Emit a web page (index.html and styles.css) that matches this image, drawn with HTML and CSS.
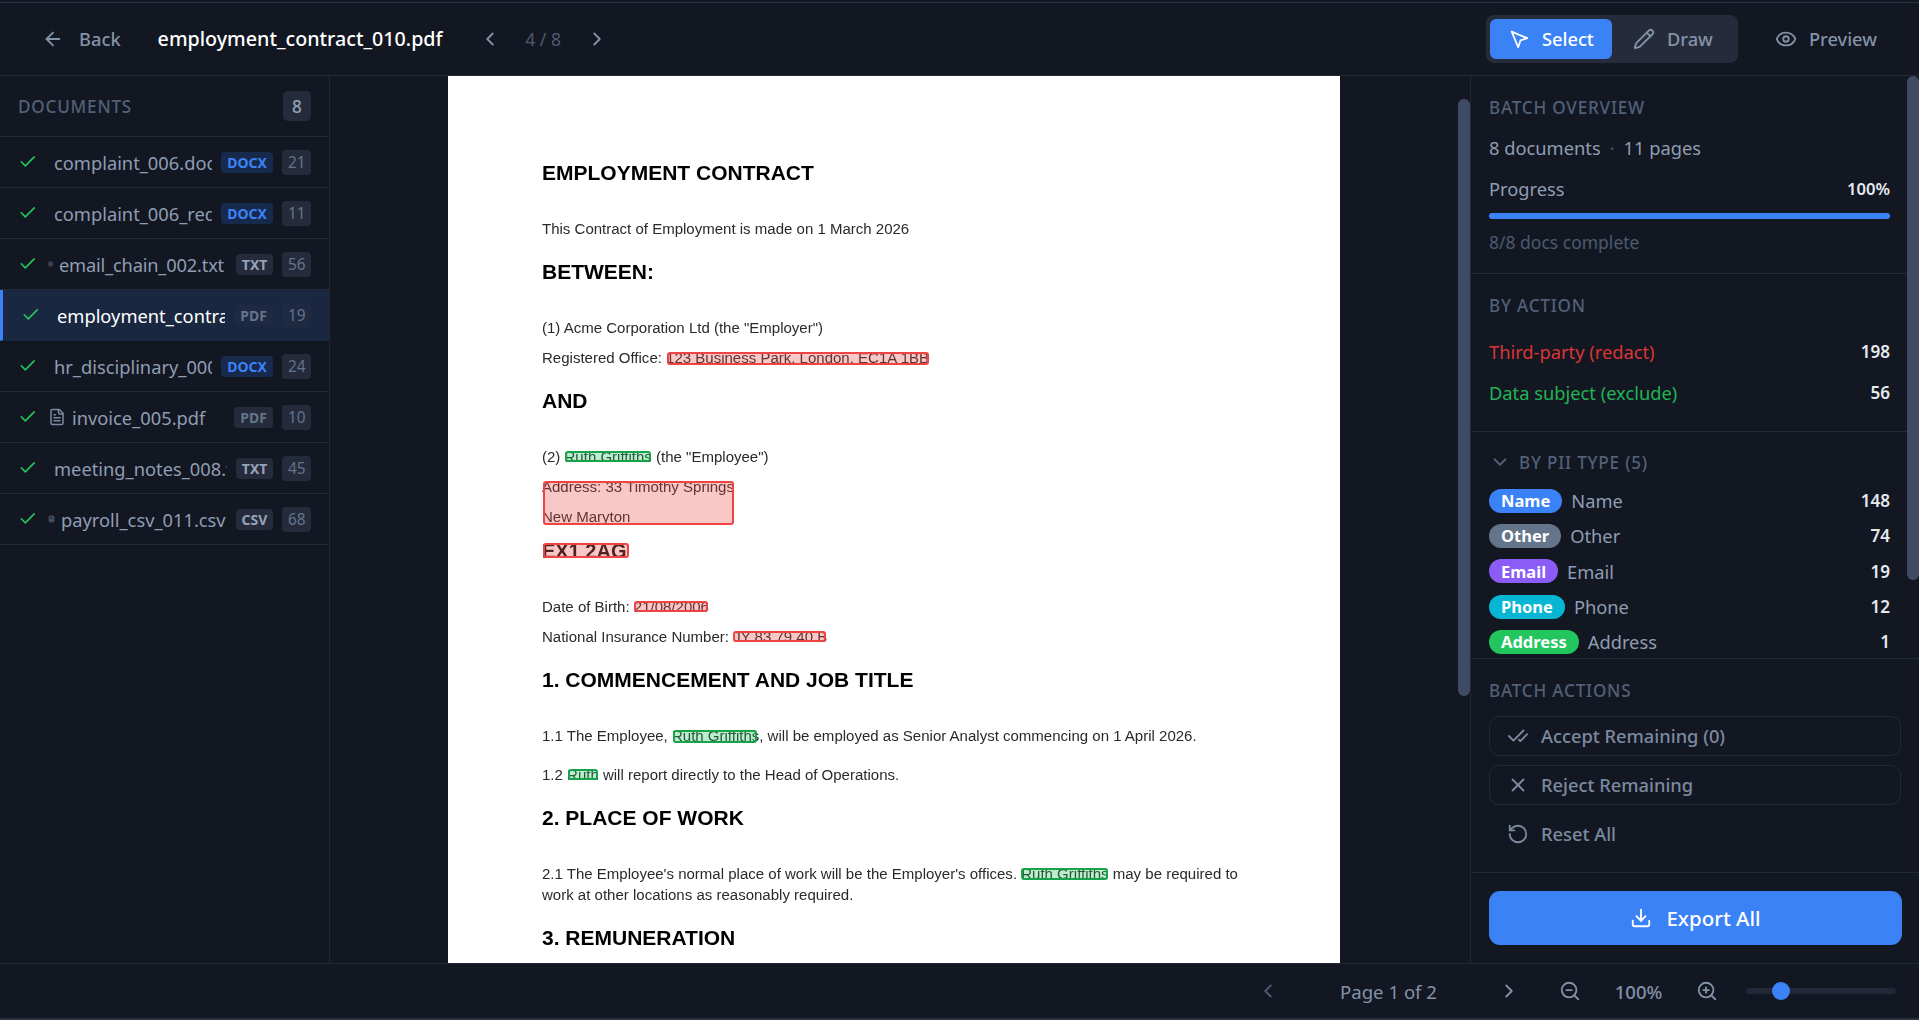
FILE: index.html
```html
<!DOCTYPE html>
<html lang="en">
<head>
<meta charset="utf-8">
<title>employment_contract_010.pdf</title>
<link rel="stylesheet" href="styles.css">
</head>
<body>
<svg class="defs" aria-hidden="true">
  <symbol id="i-check" viewBox="0 0 24 24"><path d="M20 6 9 17l-5-5"/></symbol>
  <symbol id="i-file" viewBox="0 0 24 24"><path d="M15 2H6a2 2 0 0 0-2 2v16a2 2 0 0 0 2 2h12a2 2 0 0 0 2-2V7Z"/><path d="M14 2v4a2 2 0 0 0 2 2h4"/><path d="M10 9H8"/><path d="M16 13H8"/><path d="M16 17H8"/></symbol>
  <symbol id="i-left" viewBox="0 0 24 24"><path d="m15 18-6-6 6-6"/></symbol>
  <symbol id="i-right" viewBox="0 0 24 24"><path d="m9 18 6-6-6-6"/></symbol>
</svg>
<div class="app">
  <header class="topbar">
    <button class="back"><svg class="ic ic-22" viewBox="0 0 24 24"><path d="m12 19-7-7 7-7"/><path d="M19 12H5"/></svg><span>Back</span></button>
    <h1 class="doc-title">employment_contract_010.pdf</h1>
    <nav class="pager">
      <svg class="ic ic-22"><use href="#i-left"/></svg>
      <span class="pager-text">4 / 8</span>
      <svg class="ic ic-22"><use href="#i-right"/></svg>
    </nav>
    <div class="spacer"></div>
    <div class="mode">
      <button class="mode-btn mode-on"><svg class="ic ic-22" viewBox="0 0 24 24"><path d="M4.04 4.04 11.1 21l2.5-7.4L21 11.1z"/></svg>Select</button>
      <button class="mode-btn"><svg class="ic ic-22" viewBox="0 0 24 24"><path d="M21.17 6.81a1 1 0 0 0-3.99-3.99L3.84 16.17a2 2 0 0 0-.5.83l-1.32 4.35a.5.5 0 0 0 .62.62l4.35-1.32a2 2 0 0 0 .83-.5z"/><path d="m15 5 4 4"/></svg>Draw</button>
    </div>
    <button class="preview"><svg class="ic ic-22" viewBox="0 0 24 24"><path d="M2.06 12.35a1 1 0 0 1 0-.7 10.75 10.75 0 0 1 19.88 0 1 1 0 0 1 0 .7 10.75 10.75 0 0 1-19.88 0"/><circle cx="12" cy="12" r="3"/></svg>Preview</button>
  </header>

  <div class="body">
    <aside class="sidebar">
      <div class="side-head"><span class="label">DOCUMENTS</span><span class="side-total">8</span></div>
      <ul class="doc-list">
        <li class="row"><svg class="ic ic-check"><use href="#i-check"/></svg><span class="name">complaint_006.docx</span><span class="tag tag-blue">DOCX</span><span class="count">21</span></li>
        <li class="row"><svg class="ic ic-check"><use href="#i-check"/></svg><span class="name">complaint_006_redacted.docx</span><span class="tag tag-blue">DOCX</span><span class="count">11</span></li>
        <li class="row"><svg class="ic ic-check"><use href="#i-check"/></svg><svg class="ic file f5"><use href="#i-file"/></svg><span class="name">email_chain_002.txt</span><span class="tag tag-light">TXT</span><span class="count">56</span></li>
        <li class="row row-on"><svg class="ic ic-check"><use href="#i-check"/></svg><span class="name">employment_contract_010.pdf</span><span class="tag">PDF</span><span class="count">19</span></li>
        <li class="row"><svg class="ic ic-check"><use href="#i-check"/></svg><span class="name">hr_disciplinary_000.docx</span><span class="tag tag-blue">DOCX</span><span class="count">24</span></li>
        <li class="row"><svg class="ic ic-check"><use href="#i-check"/></svg><svg class="ic file f18"><use href="#i-file"/></svg><span class="name">invoice_005.pdf</span><span class="tag">PDF</span><span class="count">10</span></li>
        <li class="row"><svg class="ic ic-check"><use href="#i-check"/></svg><span class="name">meeting_notes_008.txt</span><span class="tag tag-light">TXT</span><span class="count">45</span></li>
        <li class="row"><svg class="ic ic-check"><use href="#i-check"/></svg><svg class="ic file f7"><use href="#i-file"/></svg><span class="name">payroll_csv_011.csv</span><span class="tag tag-light">CSV</span><span class="count">68</span></li>
      </ul>
    </aside>

    <main class="viewer">
      <article class="page">
        <div class="sheet">
          <h2 class="dh">EMPLOYMENT CONTRACT</h2>
          <p class="dp">This Contract of Employment is made on 1 March 2026</p>
          <h2 class="dh">BETWEEN:</h2>
          <p class="dp">(1) Acme Corporation Ltd (the "Employer")</p>
          <p class="dp">Registered Office: 123 Business Park, London, EC1A 1BB</p>
          <h2 class="dh">AND</h2>
          <p class="dp">(2) Ruth Griffiths (the "Employee")</p>
          <p class="dp">Address: 33 Timothy Springs</p>
          <p class="dp">New Maryton</p>
          <p class="dp dp-b g14">EX1 2AG</p>
          <p class="dp g36">Date of Birth: 21/08/2006</p>
          <p class="dp">National Insurance Number: JY 83 79 40 B</p>
          <h2 class="dh">1. COMMENCEMENT AND JOB TITLE</h2>
          <p class="dp">1.1 The Employee, Ruth Griffiths, will be employed as Senior Analyst commencing on 1 April 2026.</p>
          <p class="dp g19">1.2 Ruth will report directly to the Head of Operations.</p>
          <h2 class="dh">2. PLACE OF WORK</h2>
          <p class="dp">2.1 The Employee's normal place of work will be the Employer's offices. Ruth Griffiths may be required to</p>
          <p class="dp g1">work at other locations as reasonably required.</p>
          <h2 class="dh">3. REMUNERATION</h2>
        </div>
        <i class="mark red m-office"></i>
        <i class="mark green m-name"></i>
        <i class="mark red m-addr"></i>
        <i class="mark red m-post"></i>
        <i class="mark red m-dob"></i>
        <i class="mark red m-ni"></i>
        <i class="mark green m-n11"></i>
        <i class="mark green m-n12"></i>
        <i class="mark green m-n21"></i>
      </article>
      <div class="thumb thumb-main"></div>
    </main>

    <aside class="panel">
      <div class="panel-scroll">
        <section class="sec sec-over">
          <h3 class="label">BATCH OVERVIEW</h3>
          <div class="over-line"><span>8 documents</span><span class="dot">·</span><span>11 pages</span></div>
          <div class="stat stat-progress"><span>Progress</span><b>100%</b></div>
          <div class="bar"></div>
          <div class="muted">8/8 docs complete</div>
        </section>
        <section class="sec sec-action">
          <h3 class="label">BY ACTION</h3>
          <div class="stat stat-red"><span>Third-party (redact)</span><b>198</b></div>
          <div class="stat stat-green"><span>Data subject (exclude)</span><b>56</b></div>
        </section>
        <section class="sec sec-pii">
          <h3 class="label label-row"><svg class="ic ic-22" viewBox="0 0 24 24"><path d="m6 9 6 6 6-6"/></svg>BY PII TYPE (5)</h3>
          <div class="pii"><span class="pill p-blue">Name</span><span>Name</span><b>148</b></div>
          <div class="pii"><span class="pill p-slate">Other</span><span>Other</span><b>74</b></div>
          <div class="pii"><span class="pill p-purple">Email</span><span>Email</span><b>19</b></div>
          <div class="pii"><span class="pill p-cyan">Phone</span><span>Phone</span><b>12</b></div>
          <div class="pii"><span class="pill p-green">Address</span><span>Address</span><b>1</b></div>
        </section>
        <div class="thumb thumb-panel"></div>
      </div>
      <section class="sec sec-batch">
        <h3 class="label">BATCH ACTIONS</h3>
        <button class="act act-line"><svg class="ic ic-22" viewBox="0 0 24 24"><path d="M18 6 7 17l-5-5"/><path d="m22 10-7.5 7.5L13 16"/></svg>Accept Remaining (0)</button>
        <button class="act act-line"><svg class="ic ic-22" viewBox="0 0 24 24"><path d="M18 6 6 18"/><path d="m6 6 12 12"/></svg>Reject Remaining</button>
        <button class="act"><svg class="ic ic-22" viewBox="0 0 24 24"><path d="M3 12a9 9 0 1 0 9-9 9.75 9.75 0 0 0-6.74 2.74L3 8"/><path d="M3 3v5h5"/></svg>Reset All</button>
      </section>
      <div class="export-wrap">
        <button class="export"><svg class="ic ic-22" viewBox="0 0 24 24"><path d="M12 15V3"/><path d="M21 15v4a2 2 0 0 1-2 2H5a2 2 0 0 1-2-2v-4"/><path d="m7 10 5 5 5-5"/></svg>Export All</button>
      </div>
    </aside>
  </div>

  <footer class="footer">
    <svg class="ic ic-22 dim"><use href="#i-left"/></svg>
    <span class="page-of">Page 1 of 2</span>
    <svg class="ic ic-22 fwd"><use href="#i-right"/></svg>
    <svg class="ic ic-22 zo" viewBox="0 0 24 24"><circle cx="11" cy="11" r="8"/><path d="m21 21-4.3-4.3"/><path d="M8 11h6"/></svg>
    <span class="zoom-val">100%</span>
    <svg class="ic ic-22" viewBox="0 0 24 24"><circle cx="11" cy="11" r="8"/><path d="m21 21-4.3-4.3"/><path d="M11 8v6"/><path d="M8 11h6"/></svg>
    <div class="slider"><span class="knob"></span></div>
  </footer>
</div>
</body>
</html>
```
FILE: styles.css
```css
* { box-sizing: border-box; }
html, body { margin: 0; height: 100%; overflow: hidden; }
body {
  background: #131722;
  color: #8f9db3;
  font-family: "Noto Sans", sans-serif;
  font-size: 18.3px;
}
.defs { position: absolute; width: 0; height: 0; }
button { font: inherit; color: inherit; background: none; border: 0; padding: 0; }
h1, h2, h3, p, ul { margin: 0; padding: 0; list-style: none; }
.ic { fill: none; stroke: currentColor; stroke-width: 2; stroke-linecap: round; stroke-linejoin: round; flex: none; }
.ic-22 { width: 22px; height: 22px; }
.app { height: 1020px; display: flex; flex-direction: column; border-bottom: 2px solid #2a3040; }

/* top bar */
.topbar {
  height: 76px; flex: none;
  padding: 2px 42px 0 42px;
  box-shadow: inset 0 2px 0 #131722, inset 0 3px 0 #2b3246;
  border-bottom: 1px solid #222838;
  display: flex; align-items: center;
}
.back { display: flex; align-items: center; gap: 15px; font-weight: 500; color: #8492a8; }
.doc-title { margin-left: 37px; font-size: 19.7px; font-weight: 500; color: #fff; }
.pager { margin-left: 36px; display: flex; align-items: center; color: #8492a8; }
.pager-text { width: 85px; text-align: center; font-size: 17.6px; color: #4d5a70; }
.spacer { flex: 1; }
.mode { display: flex; padding: 4px; background: #252b3b; border-radius: 8px; height: 48px; width: 252px; }
.mode-btn { display: flex; align-items: center; justify-content: center; gap: 12px; width: 124px; border-radius: 6px; font-weight: 500; color: #8492a8; }
.mode-on { background: #3b82f6; color: #fff; }
.preview { margin-left: 37px; display: flex; align-items: center; gap: 12px; font-weight: 500; color: #8492a8; }

/* body */
.body { flex: 1; min-height: 0; display: flex; }
.sidebar { width: 330px; flex: none; border-right: 1px solid #222838; }
.label { font-size: 17.1px; font-weight: 500; letter-spacing: .8px; color: #526078; }
.side-head { height: 61px; padding: 0 18px; display: flex; align-items: center; justify-content: space-between; border-bottom: 1px solid #222838; }
.side-total { width: 28px; height: 30px; border-radius: 5px; background: #252b3b; color: #94a3b8; font-size: 17.1px; font-weight: 500; display: flex; align-items: center; justify-content: center; }
.row { height: 51px; padding: 0 18px; display: flex; align-items: center; border-bottom: 1px solid #222838; }
.row-on { background: #1a2740; border-left: 3px solid #3b82f6; border-bottom-color: #1a2740; }
.row-on .name { color: #fff; }
.ic-check { width: 19.5px; height: 19.5px; margin-right: 16.5px; color: #22c55e; }
.file { height: 18px; margin-left: -6px; margin-right: 6px; color: #7c8aa0; }
.f5 { width: 5px; }
.f7 { width: 7px; }
.f18 { width: 18px; }
.name { flex: 1 1 0; min-width: 0; overflow: hidden; white-space: nowrap; }
.f5 + .name { letter-spacing: -.2px; }
.tag { flex: none; margin-left: 9px; height: 21px; padding: 0 6.5px; border-radius: 4px; background: #252b3b; color: #64748b; font-size: 14px; font-weight: 700; display: flex; align-items: center; }
.tag-blue { background: #172a4d; color: #3b82f6; }
.tag-light { color: #94a3b8; padding: 0 6px; }
.count { flex: none; margin-left: 9px; height: 25px; padding: 0 5.5px; border-radius: 4px; background: #252b3b; color: #64748b; font-size: 15.4px; display: flex; align-items: center; }
.row-on .count { background: #1e2a42; }
.row-on .tag { background: #1e2a42; }

/* viewer */
.viewer { flex: 1; min-width: 0; position: relative; overflow: hidden; display: flex; justify-content: center; padding-right: 12px; }
.page { width: 892px; height: 1154px; flex: none; position: relative; background: #fff; }
.sheet { padding: 84px 0 0 94px; font-family: "Liberation Sans", Arial, sans-serif; filter: blur(.45px); }
.dh { height: 26px; line-height: 26px; margin-top: 20px; font-size: 21px; font-weight: 700; color: #000; white-space: nowrap; }
.dh:first-child { margin-top: 0; }
.dp { height: 20px; line-height: 20px; margin-top: 10px; font-size: 15.03px; color: #2a2a2a; white-space: nowrap; }
.dh + .dp { margin-top: 33px; }
.dp.g14 { margin-top: 14px; }
.dp.g36 { margin-top: 36px; }
.dp.g19 { margin-top: 19px; }
.dp.g1 { margin-top: 1px; }
.dp-b { font-weight: 700; font-size: 20px; color: #111; }
.mark { position: absolute; border: 2.5px solid; border-radius: 3px; }
.red { border-color: #ef4444; background: rgba(239, 68, 68, .3); }
.green { border-color: #16a34a; background: rgba(34, 197, 94, .3); }
.m-office { left: 219px; top: 276px; width: 262px; height: 13px; }
.m-name { left: 117px; top: 375px; width: 86px; height: 11px; }
.m-addr { left: 95px; top: 405px; width: 191px; height: 44px; }
.m-post { left: 95px; top: 467px; width: 86px; height: 15px; }
.m-dob { left: 186px; top: 525px; width: 74px; height: 11px; }
.m-ni { left: 285px; top: 555px; width: 93px; height: 11px; }
.m-n11 { left: 225px; top: 654px; width: 84px; height: 13px; }
.m-n12 { left: 120px; top: 693px; width: 30px; height: 11px; }
.m-n21 { left: 573px; top: 792px; width: 87px; height: 12px; }
.thumb { position: absolute; width: 12px; background: #3f4a63; border-radius: 6px; }
.thumb-main { right: 0; top: 23px; height: 597px; }
.thumb-panel { right: 0; top: 0; height: 504px; }

/* right panel */
.panel { width: 449px; flex: none; border-left: 1px solid #222838; display: flex; flex-direction: column; }
.panel-scroll { height: 583px; flex: none; overflow: hidden; position: relative; border-bottom: 1px solid #222838; }
.sec { padding: 0 18px; }
.sec-over { height: 198px; padding: 20px 29px 0 18px; border-bottom: 1px solid #222838; }
.over-line { margin-top: 16px; display: flex; gap: 9px; }
.dot { color: #4d5a70; }
.stat { display: flex; justify-content: space-between; align-items: center; }
.stat b { font-weight: 600; color: #e5e9f0; font-size: 17.1px; }
.stat-progress { margin-top: 16px; }
.stat-progress b { font-size: 16.6px; }
.bar { height: 6px; margin-top: 11.5px; border-radius: 3px; background: #3b82f6; }
.muted { margin-top: 11px; font-size: 17.5px; color: #4d5a70; }
.sec-action { height: 158px; padding: 19.5px 29px 0 18px; border-bottom: 1px solid #222838; }
.stat-red span { color: #dc3535; }
.stat-green span { color: #22b455; }
.sec-action .label + .stat { margin-top: 22.5px; }
.sec-action .stat + .stat { margin-top: 16px; }
.sec-pii { padding: 18.5px 29px 0 18px; }
.label-row { display: flex; align-items: center; gap: 8px; margin-bottom: 9.5px; }
.pii { height: 35.3px; display: flex; align-items: center; gap: 9px; }
.pii b { margin-left: auto; font-weight: 600; color: #e5e9f0; font-size: 17.1px; }
.pill { height: 24px; padding: 0 12px; border-radius: 12px; color: #fff; font-size: 16.5px; font-weight: 700; display: flex; align-items: center; }
.p-blue { background: #3b82f6; }
.p-slate { background: #64748b; }
.p-purple { background: #8b5cf6; }
.p-cyan { background: #06b6d4; }
.p-green { background: #22c55e; }
.sec-batch { height: 214px; flex: none; padding-top: 19.5px; border-bottom: 1px solid #222838; display: flex; flex-direction: column; }
.act { width: 100%; height: 40px; flex: none; margin-top: 9px; padding-left: 17px; border-radius: 10px; border: 1px solid transparent; display: flex; align-items: center; gap: 12px; font-weight: 500; color: #7c8aa0; }
.sec-batch .label + .act { margin-top: 14px; }
.act-line { border-color: #222838; }
.export-wrap { padding: 18px 17px 0 18px; }
.export { width: 100%; height: 54px; border-radius: 11px; background: #3b82f6; color: #fff; font-size: 20.5px; font-weight: 500; display: flex; align-items: center; justify-content: center; gap: 14px; }

/* footer */
.footer { height: 55px; flex: none; border-top: 1px solid #222838; padding-right: 23px; display: flex; align-items: center; justify-content: flex-end; color: #8492a8; }
.dim { color: #4d5a70; }
.page-of { margin-left: 61px; font-size: 18.6px; }
.fwd { margin-left: 61px; }
.zo { margin-left: 39px; }
.zoom-val { width: 115px; text-align: center; font-weight: 500; font-size: 18.5px; }
.slider { margin-left: 28px; width: 150px; height: 6px; border-radius: 3px; background: #222838; position: relative; }
.knob { position: absolute; left: 26px; top: -6px; width: 18px; height: 18px; border-radius: 50%; background: #3b82f6; }
```
